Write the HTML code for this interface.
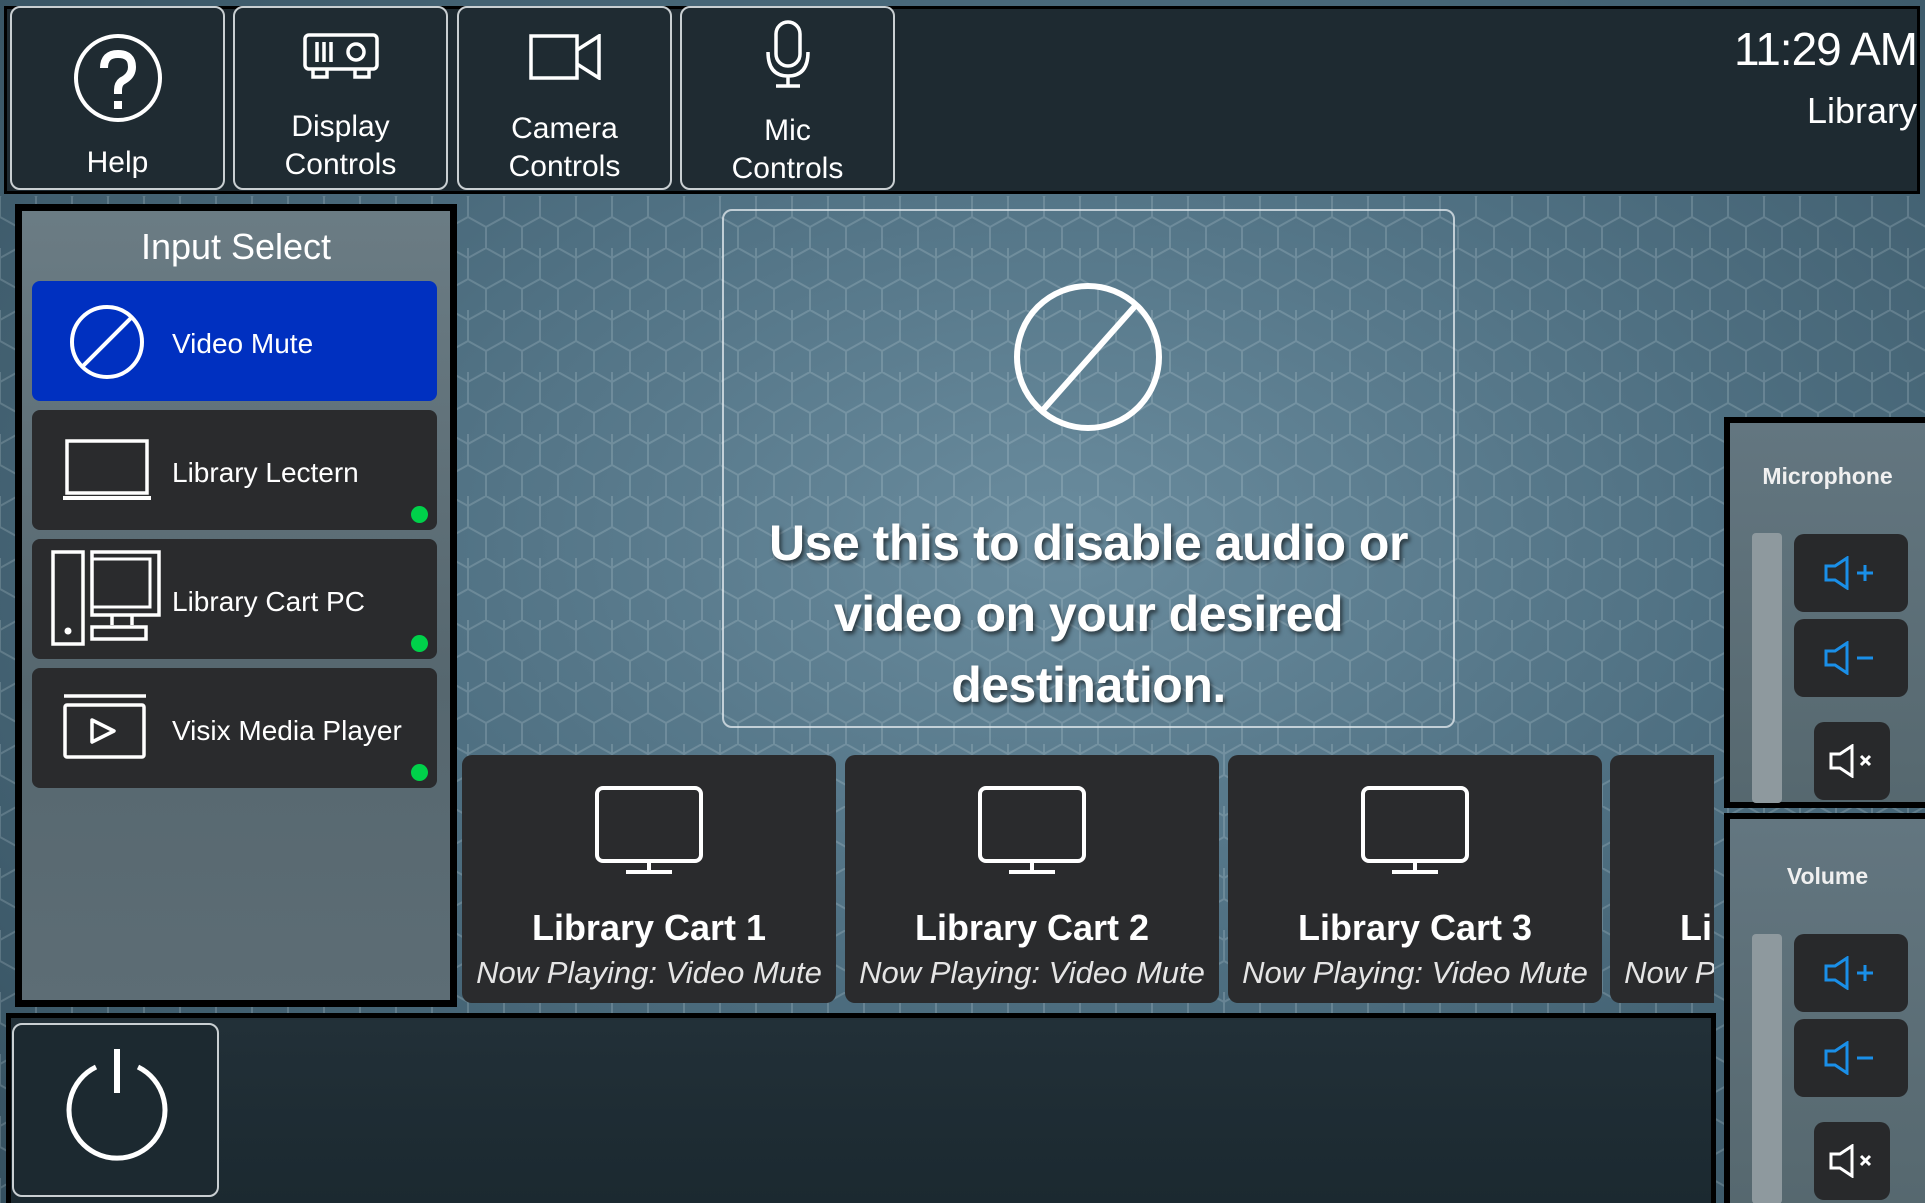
<!DOCTYPE html>
<html><head><meta charset="utf-8">
<style>
*{box-sizing:border-box;margin:0;padding:0}
html,body{width:1925px;height:1203px;overflow:hidden;background:#000}
body{position:relative;font-family:"Liberation Sans Narrow","Liberation Sans",sans-serif;color:#fff}
.abs{position:absolute}
#bg{left:0;top:0;width:1925px;height:1203px;background:radial-gradient(ellipse at 55% 45%,#6a8c9e 0%,#4f7082 45%,#35505f 100%)}
.top{left:4px;top:6px;width:1916px;height:188px;background:#1e2a31;border:3px solid #000}
.tb{top:6px;height:184px;border:2px solid #c9cfd2;border-radius:10px;background:#1f2b32;text-align:center;font-size:30px;line-height:38px}
.tb svg{display:block;margin:0 auto}
.panel{left:15px;top:204px;width:442px;height:803px;border:7px solid #000;background:linear-gradient(180deg,#6b7c84,#56676f 60%,#5d6d75)}
.ibtn{left:32px;width:405px;height:120px;border-radius:8px;background:#2a2b2d;font-size:28px}
.ibtn span{position:absolute;left:140px;top:47px}
.dot{position:absolute;right:9px;bottom:7px;width:17px;height:17px;border-radius:50%;background:#00d14a}
.msg{left:722px;top:209px;width:733px;height:519px;border:2px solid rgba(230,236,240,.75);border-radius:10px}
.msgt{left:722px;top:508px;width:733px;text-align:center;font-family:"Liberation Sans",sans-serif;font-weight:bold;font-size:50px;line-height:71px;text-shadow:2px 3px 4px rgba(0,0,0,.6);letter-spacing:-0.5px}
.card{top:0;width:374px;height:248px;border-radius:10px;background:#2a2b2d;text-align:center;overflow:hidden}
.card svg{position:absolute;left:50%;margin-left:-55px;top:30px}
.card b{position:absolute;left:0;right:0;top:152px;font-size:36px;font-family:"Liberation Sans",sans-serif}
.card i{position:absolute;left:0;right:0;top:200px;font-size:31px;color:#e5e5e5;white-space:nowrap}
.bot{left:6px;top:1013px;width:1710px;height:190px;border:5px solid #000;border-bottom:none;background:linear-gradient(180deg,#223038,#1b2930)}
.side{left:1724px;width:201px;border:6px solid #000;border-right:none;background:linear-gradient(180deg,#637680,#56686f)}
.side h3{position:absolute;left:0;right:0;text-align:center;font-size:23px;font-family:"Liberation Sans",sans-serif;font-weight:bold;color:#f0f0f0}
.bar{position:absolute;left:22px;width:30px;border-radius:4px;background:#8e999e}
.vb{position:absolute;left:64px;width:114px;height:78px;border-radius:10px;background:#28292b}
.mb{position:absolute;left:84px;width:76px;height:78px;border-radius:10px;background:#28292b}
.vb svg,.mb svg{position:absolute;left:50%;top:50%;transform:translate(-50%,-50%)}
</style></head><body>
<div id="bg" class="abs"></div>
<svg class="abs" style="left:0;top:0" width="1925" height="1203">
<defs><pattern id="hx" width="36" height="62" patternUnits="userSpaceOnUse">
<path d="M18 0 L36 10 L36 31 L18 41 L0 31 L0 10 Z M18 41 L18 62 M0 10 L0 0 M36 10 L36 0" fill="none" stroke="rgba(210,225,232,.2)" stroke-width="2"/>
</pattern></defs>
<rect x="0" y="196" width="1925" height="1007" fill="url(#hx)"/>
</svg>

<div class="top abs"></div>
<div class="tb abs" style="left:10px;width:215px">
<svg width="96" height="96" viewBox="0 0 96 96" style="margin-top:22px"><circle cx="48" cy="48" r="42" fill="none" stroke="#fff" stroke-width="4"/><path d="M34 38 Q34 24 48 24 Q62 24 62 37 Q62 46 52 51 Q48 54 48 60 L48 64" fill="none" stroke="#fff" stroke-width="8"/><rect x="44" y="71" width="8" height="8" fill="#fff"/></svg>
<div style="margin-top:18px">Help</div></div>
<div class="tb abs" style="left:233px;width:215px">
<svg width="76" height="50" viewBox="0 0 76 50" style="margin-top:24px"><rect x="2" y="3" width="72" height="34" rx="4" fill="none" stroke="#fff" stroke-width="3.5"/><path d="M10 37 v8 h14 v-8 M52 37 v8 h14 v-8 M14 10 v20 M21 10 v20 M28 10 v20" stroke="#fff" stroke-width="3.5" fill="none"/><circle cx="53" cy="20" r="8" fill="none" stroke="#fff" stroke-width="3.5"/></svg>
<div style="margin-top:26px">Display<br>Controls</div></div>
<div class="tb abs" style="left:457px;width:215px">
<svg width="72" height="46" viewBox="0 0 72 46" style="margin-top:26px"><rect x="2" y="2" width="46" height="42" fill="none" stroke="#fff" stroke-width="3.5"/><path d="M48 16 L70 2 V44 L48 30" fill="none" stroke="#fff" stroke-width="3.5"/></svg>
<div style="margin-top:30px">Camera<br>Controls</div></div>
<div class="tb abs" style="left:680px;width:215px">
<svg width="48" height="68" viewBox="0 0 48 68" style="margin-top:12px"><rect x="12" y="2" width="24" height="44" rx="12" fill="none" stroke="#fff" stroke-width="3.5"/><path d="M4 32 Q4 56 24 56 Q44 56 44 32 M24 56 V66 M12 66 H36" fill="none" stroke="#fff" stroke-width="3.5"/></svg>
<div style="margin-top:24px">Mic<br>Controls</div></div>
<div class="abs" style="right:8px;top:22px;font-size:46px;font-family:'Liberation Sans',sans-serif;letter-spacing:-1px">11:29 AM</div>
<div class="abs" style="right:8px;top:90px;font-size:36px;font-family:'Liberation Sans',sans-serif">Library</div>

<div class="panel abs"></div>
<div class="abs" style="left:15px;width:442px;top:226px;text-align:center;font-size:36px">Input Select</div>
<div class="ibtn abs" style="top:281px;background:#0030c0"><svg class="abs" style="left:36px;top:22px" width="78" height="78" viewBox="0 0 78 78"><circle cx="39" cy="39" r="35" fill="none" stroke="#fff" stroke-width="4"/><path d="M15 63 L63 15" stroke="#fff" stroke-width="4"/></svg><span>Video Mute</span></div>
<div class="ibtn abs" style="top:410px"><svg class="abs" style="left:30px;top:28px" width="90" height="64" viewBox="0 0 90 64"><rect x="5" y="3" width="80" height="52" fill="none" stroke="#fff" stroke-width="3.5"/><path d="M1 60 H89" stroke="#fff" stroke-width="4"/></svg><span>Library Lectern</span><div class="dot"></div></div>
<div class="ibtn abs" style="top:539px"><svg class="abs" style="left:18px;top:10px" width="112" height="100" viewBox="0 0 112 100"><rect x="3" y="3" width="30" height="92" fill="none" stroke="#fff" stroke-width="3.5"/><circle cx="18" cy="82" r="3.5" fill="#fff"/><rect x="42" y="3" width="67" height="63" fill="none" stroke="#fff" stroke-width="3.5"/><rect x="42" y="10" width="58" height="48" fill="none" stroke="#fff" stroke-width="3"/><path d="M62 66 V76 M82 66 V76 M42 78 H96 V90 H42 Z" fill="none" stroke="#fff" stroke-width="3.5"/></svg><span>Library Cart PC</span><div class="dot"></div></div>
<div class="ibtn abs" style="top:668px"><svg class="abs" style="left:30px;top:26px" width="86" height="66" viewBox="0 0 86 66"><path d="M2 2 H84" stroke="#fff" stroke-width="3.5"/><rect x="3" y="11" width="79" height="52" rx="2" fill="none" stroke="#fff" stroke-width="3.5"/><path d="M30 26 L52 37 L30 48 Z" fill="none" stroke="#fff" stroke-width="3.5" stroke-linejoin="round"/></svg><span>Visix Media Player</span><div class="dot"></div></div>

<div class="msg abs"></div>
<svg class="abs" style="left:1012px;top:283px" width="152" height="152" viewBox="0 0 152 152"><ellipse cx="76" cy="74" rx="71" ry="71" fill="none" stroke="#fff" stroke-width="6"/><path d="M30 128 L124 22" stroke="#fff" stroke-width="6"/></svg>
<div class="msgt abs">Use this to disable audio or<br>video on your desired<br>destination.</div>

<div class="abs" style="left:462px;top:755px;width:1252px;height:250px;overflow:hidden">
<div class="card abs" style="left:0"><svg width="110" height="90" viewBox="0 0 110 90"><rect x="3" y="3" width="104" height="73" rx="6" fill="none" stroke="#fff" stroke-width="4"/><path d="M55 76 V86 M32 87 H78" stroke="#fff" stroke-width="4"/></svg><b>Library Cart 1</b><i>Now Playing: Video Mute</i></div>
<div class="card abs" style="left:383px"><svg width="110" height="90" viewBox="0 0 110 90"><rect x="3" y="3" width="104" height="73" rx="6" fill="none" stroke="#fff" stroke-width="4"/><path d="M55 76 V86 M32 87 H78" stroke="#fff" stroke-width="4"/></svg><b>Library Cart 2</b><i>Now Playing: Video Mute</i></div>
<div class="card abs" style="left:766px"><svg width="110" height="90" viewBox="0 0 110 90"><rect x="3" y="3" width="104" height="73" rx="6" fill="none" stroke="#fff" stroke-width="4"/><path d="M55 76 V86 M32 87 H78" stroke="#fff" stroke-width="4"/></svg><b>Library Cart 3</b><i>Now Playing: Video Mute</i></div>
<div class="card abs" style="left:1148px"><svg width="110" height="90" viewBox="0 0 110 90"><rect x="3" y="3" width="104" height="73" rx="6" fill="none" stroke="#fff" stroke-width="4"/><path d="M55 76 V86 M32 87 H78" stroke="#fff" stroke-width="4"/></svg><b>Library Cart 4</b><i>Now Playing: Video Mute</i></div>
</div>

<div class="bot abs"></div>
<div class="abs" style="left:12px;top:1023px;width:207px;height:174px;border:2px solid #c9cfd2;border-radius:10px;background:#1c2930">
<svg class="abs" style="left:48px;top:22px" width="110" height="120" viewBox="0 0 110 120"><path d="M34 20 A48 48 0 1 0 76 20" fill="none" stroke="#fff" stroke-width="5"/><path d="M55 2 V46" stroke="#fff" stroke-width="6"/></svg></div>

<div class="side abs" style="top:417px;height:391px">
<h3 style="top:40px">Microphone</h3>
<div class="bar" style="top:110px;height:270px"></div>
<div class="vb" style="top:111px"><svg width="56" height="34" viewBox="0 0 56 34"><path d="M3 10 H12 L24 2 V32 L12 24 H3 Z" fill="none" stroke="#1a8fe8" stroke-width="3"/><path d="M34 17 H50 M42 9 V25" stroke="#1a8fe8" stroke-width="3"/></svg></div>
<div class="vb" style="top:196px"><svg width="56" height="34" viewBox="0 0 56 34"><path d="M3 10 H12 L24 2 V32 L12 24 H3 Z" fill="none" stroke="#1a8fe8" stroke-width="3"/><path d="M34 17 H50" stroke="#1a8fe8" stroke-width="3"/></svg></div>
<div class="mb" style="top:299px"><svg width="48" height="34" viewBox="0 0 48 34"><path d="M3 10 H12 L24 2 V32 L12 24 H3 Z" fill="none" stroke="#fff" stroke-width="3"/><path d="M33 12 L42 21 M42 12 L33 21" stroke="#fff" stroke-width="3"/></svg></div>
</div>
<div class="side abs" style="top:813px;height:390px;border-bottom:none">
<h3 style="top:44px">Volume</h3>
<div class="bar" style="top:115px;height:270px"></div>
<div class="vb" style="top:115px"><svg width="56" height="34" viewBox="0 0 56 34"><path d="M3 10 H12 L24 2 V32 L12 24 H3 Z" fill="none" stroke="#1a8fe8" stroke-width="3"/><path d="M34 17 H50 M42 9 V25" stroke="#1a8fe8" stroke-width="3"/></svg></div>
<div class="vb" style="top:200px"><svg width="56" height="34" viewBox="0 0 56 34"><path d="M3 10 H12 L24 2 V32 L12 24 H3 Z" fill="none" stroke="#1a8fe8" stroke-width="3"/><path d="M34 17 H50" stroke="#1a8fe8" stroke-width="3"/></svg></div>
<div class="mb" style="top:303px"><svg width="48" height="34" viewBox="0 0 48 34"><path d="M3 10 H12 L24 2 V32 L12 24 H3 Z" fill="none" stroke="#fff" stroke-width="3"/><path d="M33 12 L42 21 M42 12 L33 21" stroke="#fff" stroke-width="3"/></svg></div>
</div>
</body></html>
